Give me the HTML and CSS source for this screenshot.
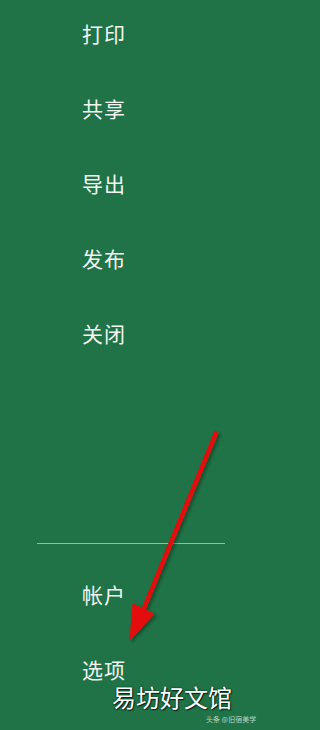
FILE: index.html
```html
<!DOCTYPE html>
<html lang="zh">
<head>
<meta charset="utf-8">
<link rel="stylesheet" href="styles.css">
</head>
<body>
<div class="panel">
  <ul class="menu menu-top">
    <li class="item">打印</li>
    <li class="item">共享</li>
    <li class="item">导出</li>
    <li class="item">发布</li>
    <li class="item">关闭</li>
  </ul>
  <div class="sep"></div>
  <ul class="menu menu-bottom">
    <li class="item">帐户</li>
    <li class="item">选项</li>
  </ul>
</div>
<svg class="arrow" width="261" height="730" viewBox="0 0 261 730">
  <defs>
    <filter id="sh" x="-50%" y="-50%" width="200%" height="200%">
      <feDropShadow dx="2" dy="2" stdDeviation="1.6" flood-color="#0a2a18" flood-opacity="0.55"/>
    </filter>
  </defs>
  <g filter="url(#sh)" fill="#e30d0d" stroke="#e30d0d">
    <line x1="216" y1="433" x2="144" y2="608" stroke-width="4.5" stroke-linecap="round"/>
    <polygon points="130,640 133,604 154,614" stroke-width="1" stroke-linejoin="round"/>
  </g>
</svg>
<div class="watermark">易坊好文馆</div>
<div class="credit">头条 @旧宿美学</div>
</body>
</html>
```
FILE: styles.css
```css
html, body {
  margin: 0;
  padding: 0;
}
body {
  width: 261px;
  height: 730px;
  overflow: hidden;
  background: #1f7347;
  font-family: "Noto Sans CJK SC", "Noto Sans", sans-serif;
  color: #f2f5f2;
  position: relative;
}
.panel {
  display: flex;
  flex-direction: column;
}
.menu {
  list-style: none;
  margin: 0;
  padding: 0 0 0 82px;
}
.menu-top {
  margin-top: -4px;
}
.item {
  height: 75px;
  line-height: 75px;
  font-size: 21px;
  letter-spacing: 1px;
}
.sep {
  margin: 172px 0 0 37px;
  width: 188px;
  height: 1px;
  background: #8fbfa3;
}
.menu-bottom {
  margin-top: 13px;
}
.arrow {
  position: absolute;
  left: 0;
  top: 0;
}
.watermark {
  position: absolute;
  left: 112px;
  top: 682px;
  font-size: 24px;
  line-height: 30px;
  color: #ffffff;
  text-shadow: 0 0 2px #0b2416, 1px 1px 1px #0b2416;
}
.credit {
  position: absolute;
  left: 206px;
  top: 714px;
  font-size: 7px;
  line-height: 10px;
  color: #b9d6c4;
}
```
